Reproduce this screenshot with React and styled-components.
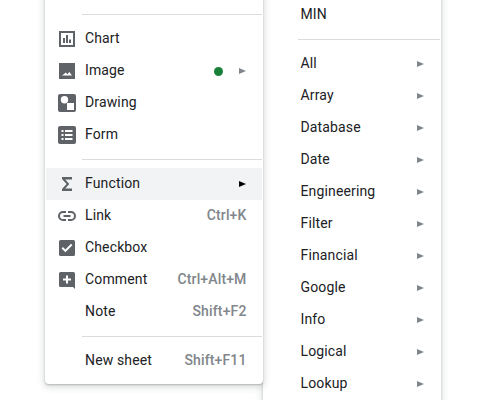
import React from "react";
import styled, { createGlobalStyle } from "styled-components";

const Global = createGlobalStyle`
  html, body { margin: 0; background: #fff; }
  body { font-family: Roboto, "Liberation Sans", sans-serif; }
`;
const Page = styled.div`
  display: flex;
  align-items: flex-start;
  height: 400px;
  padding-left: 45px;
  overflow: hidden;
`;
const Menu = styled.div`
  flex: none;
  box-sizing: border-box;
  width: ${(p) => p.$width}px;
  margin-top: -20px;
  padding: ${(p) => p.$top}px 1px ${(p) => p.$bottom}px;
  background: #fff;
  border-radius: 0 0 4px 4px;
  box-shadow: 0 2px 6px 2px rgba(60, 64, 67, 0.15), 0 1px 2px rgba(60, 64, 67, 0.3);
  z-index: ${(p) => p.$z};
`;
const Row = styled.div`
  display: flex;
  align-items: center;
  height: 32px;
  padding: 0 16px 0 ${(p) => p.$inset}px;
  background: ${(p) => (p.$active ? "#f1f3f4" : "transparent")};
  color: #202124;
  font-size: 14px;
  letter-spacing: 0.14px;
`;
const IconSlot = styled.span`
  flex: none;
  width: 24px;
  height: 24px;
  margin-right: 6px;
  color: #5f6368;
  svg { display: block; }
`;
const Blank = styled.span`
  flex: none;
  width: 30px;
`;
const Label = styled.span`
  flex: 1;
  padding-bottom: 2px;
  white-space: nowrap;
`;
const Shortcut = styled.span`
  margin-right: -0.5px;
  padding-bottom: 2px;
  color: #80868b;
  font-weight: 500;
  letter-spacing: 0.14px;
  white-space: nowrap;
`;
const Dot = styled.span`
  width: 9px;
  height: 9px;
  margin: 0 16.5px 0 0;
  border-radius: 50%;
  background: #188038;
`;
const Arrow = styled.span`
  width: 0;
  height: 0;
  border-style: solid;
  border-width: 3.5px 0 3.5px 7.5px;
  border-color: transparent transparent transparent ${(p) => (p.$active ? "#000" : "#80868b")};
`;
const Separator = styled.div`
  height: 1px;
  margin: 8px 0 8px ${(p) => p.$inset}px;
  background: #dadce0;
`;

const Svg = ({ children }) => (
  <svg width="24" height="24" viewBox="0 1 24 24" fill="currentColor">{children}</svg>
);
const icons = {
  chart: (
    <Svg>
      <path fillRule="evenodd" d="M4 5h16v16H4zM6 7v12h12V7z" />
      <path d="M8 12h2v5H8zM11 9h2v8h-2zM14 13.500h2V17h-2z" />
    </Svg>
  ),
  image: (
    <Svg>
      <path fillRule="evenodd" d="M4 5h16v16H4zM7 17.500h10l-2.600-3.600-2 2.300-1.500-1.600z" />
    </Svg>
  ),
  drawing: (
    <Svg>
      <path fillRule="evenodd" d="M5 4h14a2 2 0 0 1 2 2v14a2 2 0 0 1-2 2H5a2 2 0 0 1-2-2V6a2 2 0 0 1 2-2zM9.500 6a3.700 3.700 0 1 0 0 7.400 3.700 3.700 0 0 0 0-7.400zM12 13v7h7v-7z" />
    </Svg>
  ),
  form: (
    <Svg>
      <path fillRule="evenodd" d="M5 4h14a2 2 0 0 1 2 2v14a2 2 0 0 1-2 2H5a2 2 0 0 1-2-2V6a2 2 0 0 1 2-2zM6.500 8v2h2V8zM10 8v2h7.500V8zM6.500 12v2h2v-2zM10 12v2h7.500v-2zM6.500 16v2h2v-2zM10 16v2h7.500v-2z" />
    </Svg>
  ),
  sigma: (
    <Svg>
      <path d="M7 6h10v2.500h-6.700l4 4.500-4 4.500H17V20H7v-2l4.600-5L7 8z" />
    </Svg>
  ),
  link: (
    <Svg>
      <path d="M5 13a3.100 3.100 0 0 1 3.100-3.100H11V8H8a5 5 0 0 0 0 10h3v-1.900H8.100A3.100 3.100 0 0 1 5 13zm3.500 1h7v-2h-7zM16 8h-3v1.900h2.900a3.100 3.100 0 0 1 0 6.200H13V18h3a5 5 0 0 0 0-10z" />
    </Svg>
  ),
  checkbox: (
    <Svg>
      <path fillRule="evenodd" d="M5.500 5h13A1.500 1.500 0 0 1 20 6.500v13a1.500 1.500 0 0 1-1.500 1.500h-13A1.500 1.500 0 0 1 4 19.500v-13A1.500 1.500 0 0 1 5.500 5zM10.400 17.200l7-7-1.400-1.400-5.600 5.600-2.400-2.400-1.400 1.400z" />
    </Svg>
  ),
  comment: (
    <Svg>
      <path fillRule="evenodd" d="M5.500 5h13A1.500 1.500 0 0 1 20 6.500V22l-2-2H5.500A1.500 1.500 0 0 1 4 18.500v-12A1.500 1.500 0 0 1 5.500 5zM11 8.500V11.500H8v2h3v3h2v-3h3v-2h-3v-3z" />
    </Svg>
  ),
};

const leftA = [
  { icon: "chart", label: "Chart" },
  { icon: "image", label: "Image", dot: true, arrow: true },
  { icon: "drawing", label: "Drawing" },
  { icon: "form", label: "Form" },
];
const leftB = [
  { icon: "sigma", label: "Function", arrow: true, active: true },
  { icon: "link", label: "Link", key: "Ctrl+K" },
  { icon: "checkbox", label: "Checkbox" },
  { icon: "comment", label: "Comment", key: "Ctrl+Alt+M" },
  { label: "Note", key: "Shift+F2" },
];
const categories = ["All", "Array", "Database", "Date", "Engineering", "Filter", "Financial", "Google", "Info", "Logical", "Lookup"];

const LeftRow = ({ item }) => (
  <Row $inset={9} $active={item.active}>
    {item.icon ? <IconSlot>{icons[item.icon]}</IconSlot> : <Blank />}
    <Label>{item.label}</Label>
    {item.dot && <Dot />}
    {item.key && <Shortcut>{item.key}</Shortcut>}
    {item.arrow && <Arrow $active={item.active} />}
  </Row>
);

export default function App() {
  return (
    <Page>
      <Global />
      <Menu $width={218} $top={26} $bottom={7} $z={2}>
        <Separator $inset={36} />
        {leftA.map((i) => <LeftRow key={i.label} item={i} />)}
        <Separator $inset={36} />
        {leftB.map((i) => <LeftRow key={i.label} item={i} />)}
        <Separator $inset={36} />
        <LeftRow item={{ label: "New sheet", key: "Shift+F11" }} />
      </Menu>
      <Menu $width={178} $top={19} $bottom={8} $z={1}>
        <Row $inset={36.5}><Label>MIN</Label></Row>
        <Separator $inset={34} />
        {categories.map((c) => (
          <Row $inset={36.5} key={c}>
            <Label>{c}</Label>
            <Arrow />
          </Row>
        ))}
      </Menu>
    </Page>
  );
}
